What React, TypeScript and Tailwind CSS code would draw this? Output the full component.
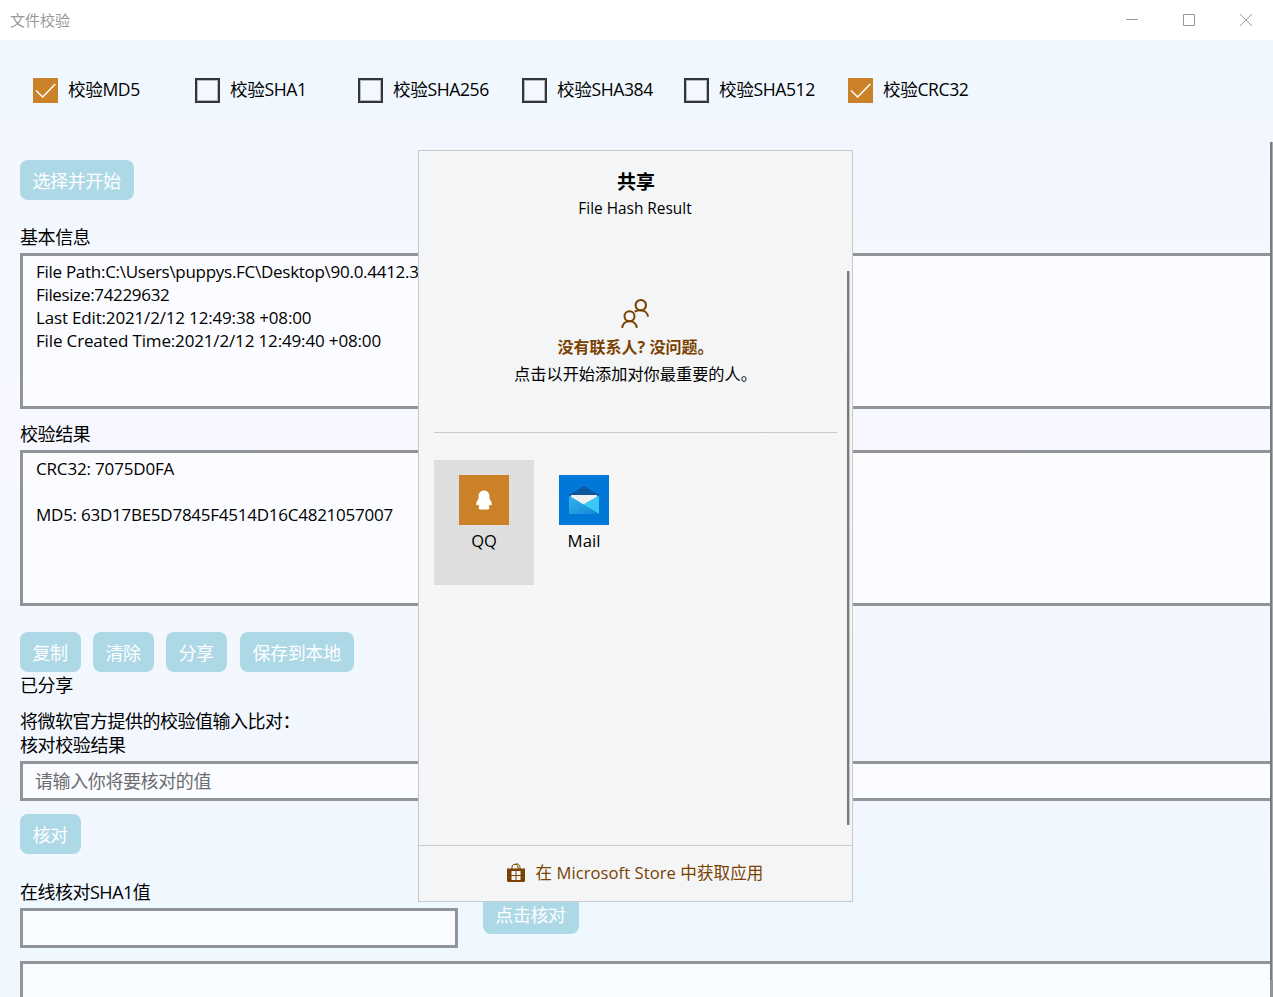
import React from "react";

const check = (
  <svg className="h-[26px] w-[25px]" viewBox="0 0 25 26" fill="none">
    <path d="M3 12.5 9.700 19 22.300 6" stroke="#fff" strokeWidth="1.5" />
  </svg>
);

function Check({ label, on, cls }: { label: string; on?: boolean; cls: string }) {
  return (
    <label className={"flex shrink-0 items-center gap-[10px] whitespace-nowrap tracking-[-0.4px] " + cls}>
      <span
        className={
          on
            ? "block h-[25px] w-[25px] shrink-0 bg-[#cb8128]"
            : "block h-[25px] w-[25px] shrink-0 border-[2px] border-[#333639] bg-white/20 shadow-[inset_0_0_0_1px_#b5b9be]"
        }
      >
        {on && check}
      </span>
      <span className="-mt-[3px]">{label}</span>
    </label>
  );
}

function Btn({ label, cls }: { label: string; cls: string }) {
  return (
    <button
      className={
        "flex h-10 shrink-0 items-center justify-center whitespace-nowrap rounded-lg bg-[#add8e6] pr-px pt-px tracking-[-0.4px] text-white " + cls
      }
    >
      {label}
    </button>
  );
}

const box = "border-[3px] border-[#919599] bg-white/60";

function Page() {
  return (
    <main className="flex h-[957px] flex-col overflow-hidden bg-[linear-gradient(180deg,#f0f8ff_0px,#f0f8ff_30px,#f2f7ff_80px,#f3f8ff_200px,#f7f7ff_385px,#f7f7ff_410px,#f3f8ff_560px,#f2f7ff_760px,#f0f8ff_860px,#f0f8ff_957px)] pl-5 text-[18px] leading-6">
      <div className="flex h-[120px] shrink-0 pl-[13px] pt-[38px]">
        <div className="flex h-[25px] text-[17.6px]">
          <Check label="校验MD5" on cls="w-[162px]" />
          <Check label="校验SHA1" cls="w-[163px]" />
          <Check label="校验SHA256" cls="w-[164px]" />
          <Check label="校验SHA384" cls="w-[162px]" />
          <Check label="校验SHA512" cls="w-[164px]" />
          <Check label="校验CRC32" on cls="w-[130px]" />
        </div>
      </div>
      <Btn label="选择并开始" cls="w-[114px]" />
      <div className="mt-[25px] h-[28px] shrink-0 tracking-[-0.4px]">基本信息</div>
      <div className={"h-[156px] shrink-0 whitespace-nowrap pl-[13px] pt-[4px] text-[17px] leading-[23px] " + box}>
        <div className="tracking-[-0.28px]">File Path:C:\Users\puppys.FC\Desktop\90.0.4412.3</div>
        <div className="tracking-[-0.33px]">Filesize:74229632</div>
        <div className="tracking-[-0.17px]">Last Edit:2021/2/12 12:49:38 +08:00</div>
        <div className="tracking-[-0.15px]">File Created Time:2021/2/12 12:49:40 +08:00</div>
      </div>
      <div className="mt-[13px] h-[28px] shrink-0 tracking-[-0.4px]">校验结果</div>
      <div className={"h-[156px] shrink-0 whitespace-nowrap pl-[13px] pt-[4px] text-[17px] leading-[23px] " + box}>
        <div className="tracking-[-0.17px]">CRC32: 7075D0FA</div>
        <div className="mt-[23px] tracking-[-0.25px]">MD5: 63D17BE5D7845F4514D16C4821057007</div>
      </div>
      <div className="mt-[26px] flex shrink-0">
        <Btn label="复制" cls="w-[61px]" />
        <Btn label="清除" cls="ml-3 w-[61px]" />
        <Btn label="分享" cls="ml-3 w-[61px]" />
        <Btn label="保存到本地" cls="ml-[13px] w-[114px]" />
      </div>
      <div className="mt-px h-9 shrink-0 tracking-[-0.4px]">已分享</div>
      <div className="shrink-0 tracking-[-0.5px]">将微软官方提供的校验值输入比对：</div>
      <div className="h-[28px] shrink-0 tracking-[-0.4px]">核对校验结果</div>
      <div className={"flex h-10 shrink-0 items-center pb-px pl-[12px] tracking-[-0.4px] text-[#6b6d70] " + box}>请输入你将要核对的值</div>
      <Btn label="核对" cls="mt-[13px] w-[61px]" />
      <div className="mt-[26px] h-[28px] shrink-0 tracking-[-0.5px]">在线核对SHA1值</div>
      <div className="flex h-10 shrink-0">
        <div className={"h-10 w-[438px] " + box} />
        <Btn label="点击核对" cls="-mt-[14px] ml-[25px] w-24" />
      </div>
      <div className={"mt-[13px] h-[80px] shrink-0 " + box} />
    </main>
  );
}

function PeopleIcon() {
  return (
    <svg className="h-[30px] w-[28px]" viewBox="0 0 28 30" fill="none" stroke="#7a4100" strokeWidth="2">
      <circle cx="19.8" cy="6.2" r="5.2" />
      <circle cx="8.5" cy="17.2" r="5" />
      <path d="M1.2 28.9c.3-4 3.400-6.700 7.300-6.700s7 2.700 7.300 6.700M13.600 12.700c1.600-1 3.800-1.500 6.200-1.400 3.900.1 6.800 2.800 7.200 6.300" />
    </svg>
  );
}

function ShareDialog() {
  return (
    <section className="absolute left-[418px] top-[150px] flex h-[752px] w-[435px] flex-col border border-[#c8c9ca] bg-[linear-gradient(180deg,#f5f6f7_0%,#f3f5f6_15%,#f6f6f6_50%,#f4f5f7_100%)]">
      <h1 className="mt-[18px] pl-px text-center text-[19px] font-bold leading-[26px]">共享</h1>
      <div className="pr-px text-center text-[15.4px] leading-[27px]">File Hash Result</div>
      <div className="mt-[77px] flex justify-center pr-px">
        <PeopleIcon />
      </div>
      <div className="mt-[5px] text-center text-[16px] font-bold leading-[27px] text-[#7a4100]">没有联系人? 没问题。</div>
      <div className="text-center text-[16.2px] leading-[27px]">点击以开始添加对你最重要的人。</div>
      <div className="ml-[15px] mt-[44px] w-[403px] border-t border-[#c8c9ca]" />
      <div className="ml-[15px] mt-[27px] flex h-[125px] text-[16.5px] leading-6">
        <div className="flex w-[100px] flex-col items-center bg-[#dedede] pt-[15px]">
          <div className="flex h-[50px] w-[50px] items-center justify-center bg-[#cb8128]">
            <svg className="h-5 w-4" viewBox="0 0 16 20" fill="#fff">
              <path d="M8 .5C4.800.5 2.600 2.900 2.600 6v2.600C1.300 10.400.1 12.700.2 14.600c.1 1 .9 1 2-.1.300 1 .6 1.600 1.200 2.200-1.400.7-1.200 2.700.9 2.700h7.400c2.100 0 2.300-2 .9-2.700.6-.6.9-1.200 1.200-2.200 1.100 1.100 1.900 1.100 2 .1.100-1.900-1.100-4.200-2.400-6V6C13.400 2.900 11.200.5 8 .5z" />
            </svg>
          </div>
          <div className="mt-1">QQ</div>
        </div>
        <div className="flex w-[100px] flex-col items-center pt-[15px]">
          <div className="flex h-[50px] w-[50px] items-center justify-center bg-[#0078d7]">
            <svg className="h-7 w-[30px]" viewBox="0 0 30 28">
              <defs>
                <linearGradient id="mail" x1="0" y1="0" x2="1" y2="1">
                  <stop offset="0" stopColor="#32b7ee" />
                  <stop offset="1" stopColor="#1683d8" />
                </linearGradient>
              </defs>
              <path d="M0 9 15 0 30 9v2H0z" fill="#0a56a0" />
              <path d="M2 9h26v3L15 20 2 12z" fill="#f0f0f0" />
              <path d="M30 9.500V28L14 18.500z" fill="#3bc8f3" />
              <path d="M0 9.500 30 28H0z" fill="url(#mail)" />
            </svg>
          </div>
          <div className="mt-1 text-[16.8px]">Mail</div>
        </div>
      </div>
      <footer className="mt-auto flex h-[56px] shrink-0 items-center justify-center gap-[11px] whitespace-nowrap border-t border-[#c8c9ca] pr-px text-[16.6px] text-[#7a4100]">
        <svg className="-mt-[3px] h-[19px] w-[18px]" viewBox="0 0 18 19">
          <path d="M5 6V4C5 .3 11 .3 11 4V6M8 2c1-2 5-1.300 5 2.500V6" fill="none" stroke="#7a4100" />
          <path d="M0 5.500h18V17.500a1.500 1.500 0 0 1-1.500 1.500h-15A1.500 1.500 0 0 1 0 17.500z" fill="#7a4100" />
          <path d="M4.500 8h4v4h-4zM9.500 8h4v4h-4zM4.500 13h4v4h-4zM9.500 13h4v4h-4z" fill="#f4f5f7" />
        </svg>
        <span className="tracking-[0.05px]">在 Microsoft Store 中获取应用</span>
      </footer>
      <div className="absolute left-[428px] top-[120px] h-[554px] w-[3px] border-r border-[#c4c6c6] bg-[#7a7a7a]" />
    </section>
  );
}

export default function App() {
  return (
    <div className="relative h-[997px] w-[1273px] overflow-hidden bg-white font-['Open_Sans','Noto_Sans_CJK_SC',sans-serif] text-black">
      <header className="flex h-10 items-center justify-between pl-[10px] pr-[21px] text-[15px] text-[#999]">
        <span>文件校验</span>
        <svg className="h-3 w-[126px]" viewBox="0 0 126 12" fill="none" stroke="#999">
          <path d="M0 5.500h12M57.500.5h11v11h-11zM114 0l12 12M126 0l-12 12" />
        </svg>
      </header>
      <Page />
      <div className="absolute left-[1270px] top-[142px] h-[838px] w-[3px] border-r border-[#a9adad] bg-[#7a7d7c]" />
      <ShareDialog />
    </div>
  );
}
